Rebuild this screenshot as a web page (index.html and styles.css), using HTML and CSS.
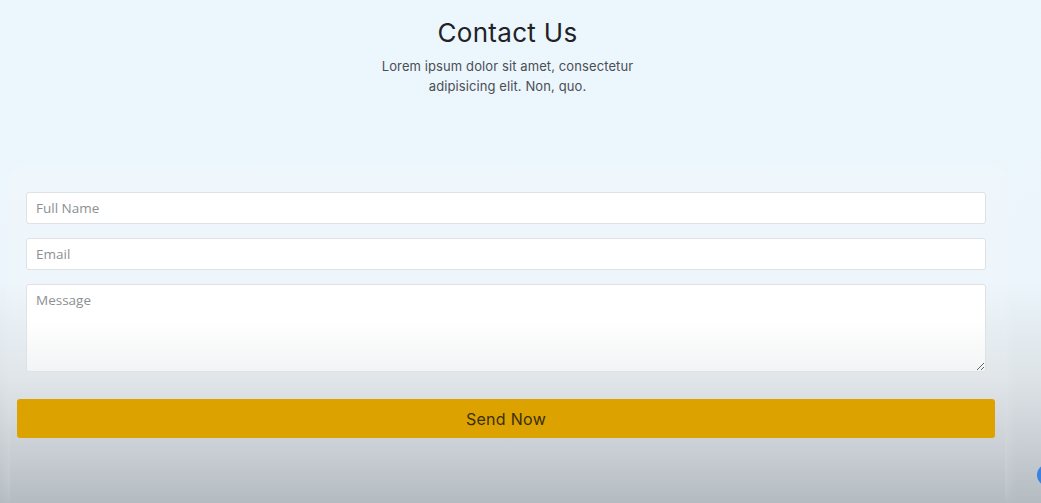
FILE: index.html
```html
<!DOCTYPE html>
<html lang="en">
<head>
<meta charset="utf-8">
<title>Contact Us</title>
<link rel="stylesheet" href="styles.css">
</head>
<body>
<main class="page">
  <header class="intro">
    <h1 class="title">Contact Us</h1>
    <p class="lead">Lorem ipsum dolor sit amet, consectetur adipisicing elit. Non, quo.</p>
  </header>
  <form class="card">
    <div class="fields">
      <input class="field" type="text" placeholder="Full Name">
      <input class="field" type="email" placeholder="Email">
      <textarea class="field area" placeholder="Message"></textarea>
    </div>
    <button class="send" type="button">Send Now</button>
  </form>
</main>
<span class="bubble"></span>
</body>
</html>
```

FILE: styles.css
```css
html, body {
  margin: 0;
  height: 100%;
}
body {
  font-family: Inter, "Noto Sans", sans-serif;
  background: linear-gradient(180deg, #ecf7fd 0%, #ebf5fb 56%, #dde3e7 75%, #c9cfd4 88%, #b4bbc1 100%);
  overflow: hidden;
  position: relative;
}
.page {
  width: 995px;
  height: 100%;
  margin-left: 10px;
  display: flex;
  flex-direction: column;
}
.intro {
  display: flex;
  flex-direction: column;
  align-items: center;
  padding-top: 16px;
  height: 172px;
  flex: none;
  box-sizing: border-box;
}
.title {
  margin: 0;
  font-size: 26px;
  font-weight: 400;
  color: #1f2328;
  line-height: 34px;
  letter-spacing: 0.3px;
}
.lead {
  margin: 6px 0 0;
  width: 270px;
  text-align: center;
  font-size: 13px;
  line-height: 20px;
  letter-spacing: 0.1px;
  color: #4a4e54;
}
.card {
  flex: 1;
  display: flex;
  flex-direction: column;
  padding: 20px 0 22px;
  background: linear-gradient(180deg, rgba(255, 255, 255, 0.16) 0%, rgba(255, 255, 255, 0.1) 60%, rgba(255, 255, 255, 0) 100%);
  box-shadow: 0 -4px 14px rgba(255, 255, 255, 0.25);
}
.fields {
  display: flex;
  flex-direction: column;
  gap: 14px;
  padding: 0 19px 0 16px;
}
.field {
  display: block;
  height: 32px;
  box-sizing: border-box;
  border: 1px solid #dfe2e5;
  border-radius: 3px;
  background: #fff;
  padding: 0 9px;
  font-family: "Open Sans", "Noto Sans", sans-serif;
  font-size: 13.5px;
  color: #333;
}
.field::placeholder {
  color: #8c8f93;
}
.area {
  height: 88px;
  padding-top: 6px;
  resize: vertical;
  background: linear-gradient(180deg, #ffffff 40%, #f3f4f5 100%);
}
.send {
  margin: 27px 10px 0 7px;
  height: 39px;
  border: none;
  border-radius: 3px;
  background: #dca300;
  color: #3b2e0c;
  font-family: Inter, "Noto Sans", sans-serif;
  font-size: 16px;
  font-weight: 400;
  letter-spacing: 0.3px;
}
.bubble {
  position: absolute;
  left: 1037px;
  top: 464px;
  width: 22px;
  height: 22px;
  border-radius: 50%;
  background: #3b82e0;
}
```
